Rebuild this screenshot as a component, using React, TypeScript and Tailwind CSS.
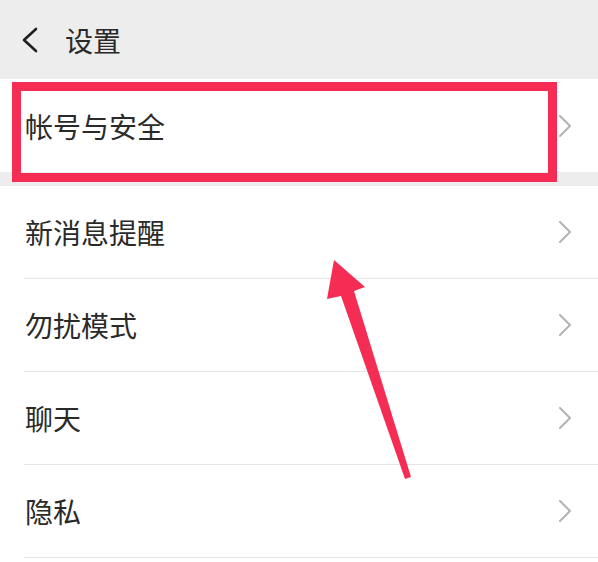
import React from "react";

const items = ["新消息提醒", "勿扰模式", "聊天", "隐私"];

function Chevron() {
  return (
    <svg width="14" height="22" viewBox="0 0 14 22" fill="none">
      <polyline points="2,1 12,11 2,21" stroke="#b3b3b3" strokeWidth="2" strokeLinecap="round" strokeLinejoin="round" />
    </svg>
  );
}

export default function App() {
  return (
    <div
      className="relative w-[598px] h-[562px] overflow-hidden bg-white text-[#2a2a2a]"
      style={{ fontFamily: '"Noto Sans CJK SC", "Noto Sans", sans-serif' }}
    >
      {/* Header */}
      <div className="h-[79px] bg-[#ededed] flex items-center pl-[21px]">
        <svg width="18" height="26" viewBox="0 0 18 26" fill="none">
          <polyline points="15,2 3,13 15,24" stroke="#1f1f1f" strokeWidth="2.6" strokeLinecap="round" strokeLinejoin="round" />
        </svg>
        <span className="ml-[26px] text-[28px] leading-none">设置</span>
      </div>

      {/* Account row */}
      <div className="h-[93px] flex items-center justify-between pl-[25px] pr-[26px]">
        <span className="text-[28px] leading-none">帐号与安全</span>
        <Chevron />
      </div>

      <div className="h-[14px] bg-[#ededed]" />

      {/* List */}
      <div>
        {items.map((label) => (
          <div
            key={label}
            className="ml-[24px] h-[93px] border-b border-[#e6e6e6] flex items-center justify-between pl-[1px] pr-[26px]"
          >
            <span className="text-[28px] leading-none">{label}</span>
            <Chevron />
          </div>
        ))}
      </div>

      {/* Highlight box */}
      <div className="absolute left-[12px] top-[82px] w-[545px] h-[100px] border-[9px] border-[#f52d55]" />

      {/* Arrow */}
      <svg className="absolute left-0 top-0 pointer-events-none" width="598" height="562" viewBox="0 0 598 562">
        <polygon
          points="334,260 365,287 354,291 411,477 405,479 341,296 327,299"
          fill="#f52d55"
          strokeLinejoin="round"
        />
      </svg>
    </div>
  );
}
